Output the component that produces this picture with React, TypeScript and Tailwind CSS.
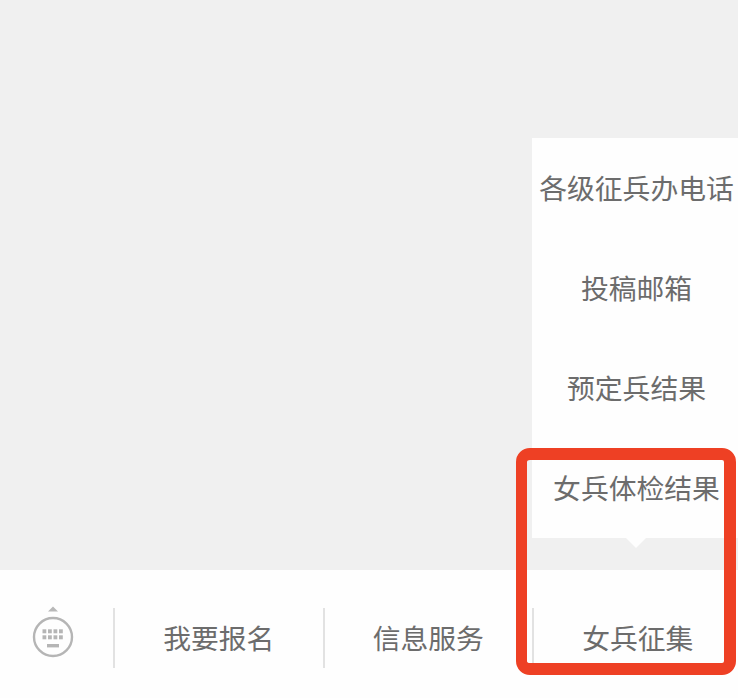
const font = { fontFamily: '"Noto Sans CJK SC", sans-serif' };

const menu = ["各级征兵办电话", "投稿邮箱", "预定兵结果", "女兵体检结果"];
const tabs = ["我要报名", "信息服务", "女兵征集"];

function KeyboardIcon() {
  const keys = [];
  for (let r = 0; r < 2; r++) {
    for (let c = 0; c < 4; c++) {
      keys.push(<rect key={`${r}-${c}`} x={9.5 + c * 5.5} y={12.3 + r * 6} width="3.8" height="4" fill="#b5b5b5" />);
    }
  }
  return (
    <svg width="42" height="58" viewBox="0 0 42 58" className="block">
      <path d="M16 9.500 L21 4.500 L26 9.500 Z" fill="#b8b8b8" />
      <g transform="translate(1 15)">
        <circle cx="20" cy="20" r="19" fill="none" stroke="#b5b5b5" strokeWidth="2.4" />
        {keys}
        <rect x="14" y="27" width="12" height="3.4" fill="#b5b5b5" />
      </g>
    </svg>
  );
}

export default function App() {
  return (
    <div className="w-[738px] h-[698px] overflow-hidden bg-[#fefefe] flex flex-col relative" style={font}>
      <div className="h-[570px] bg-[#f0f0f0] flex justify-end pt-[138px]">
        <div className="w-[206px] h-[400px] bg-[#fefefe] flex flex-col relative">
          {menu.map((m) => (
            <div key={m} className="h-[100px] pl-[3px] flex items-center justify-center text-[27.8px] leading-none text-[#6c6c6c] whitespace-nowrap">
              {m}
            </div>
          ))}
          <div className="absolute left-[94px] top-[400px] w-0 h-0 border-l-[10px] border-r-[10px] border-t-[10px] border-l-transparent border-r-transparent border-t-[#fefefe]" />
        </div>
      </div>
      <div className="h-[128px] flex items-start pt-[38px]">
        <div className="w-[113px] shrink-0 h-[60px] flex justify-start items-start -mt-[6px] pl-[32px]">
          <KeyboardIcon />
        </div>
        {tabs.map((t) => (
          <div key={t} className="w-[209.500px] shrink-0 h-[60px] border-l-2 border-[#e2e2e2] flex items-center justify-center text-[27.8px] leading-none text-[#6c6c6c]">
            {t}
          </div>
        ))}
      </div>
      <div className="absolute left-[516px] top-[448px] w-[220px] h-[227px] border-[12px] border-l-[11px] border-[#ee4024] rounded-[14px]" />
    </div>
  );
}
